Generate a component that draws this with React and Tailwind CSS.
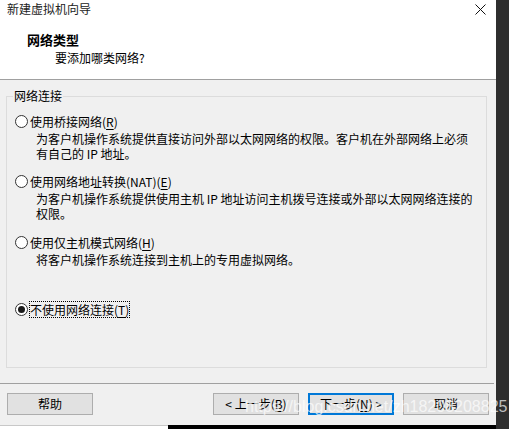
const font = { fontFamily: '"Noto Sans CJK SC", "Microsoft YaHei", "Noto Sans", sans-serif' }

function Radio({ checked }) {
  return (
    <span className="flex h-[13px] w-[13px] shrink-0 items-center justify-center rounded-full border border-[#333] bg-white">
      {checked && <span className="h-[7px] w-[7px] rounded-full bg-[#1a1a1a]" />}
    </span>
  )
}

function Option({ label, hot, desc, checked, className = '' }) {
  return (
    <div className={className}>
      <div className="flex h-[15px] items-center">
        <Radio checked={checked} />
        <span className={`ml-[2px] leading-[15px] ${checked ? 'outline outline-1 outline-dotted outline-black' : ''}`}>
          {label}(<span className="underline underline-offset-2">{hot}</span>)
        </span>
      </div>
      {desc && (
        <div className="ml-[21px] mt-[2px] leading-[15px]">
          {desc.map((l, i) => <div key={i}>{l}</div>)}
        </div>
      )}
    </div>
  )
}

function Btn({ children, focused }) {
  return (
    <button className={`h-[22px] w-[86px] bg-[#e1e1e1] text-[12px] text-black ${focused ? 'border-2 border-[#0078d7]' : 'border border-[#adadad]'}`}>
      {children}
    </button>
  )
}

export default function App() {
  return (
    <div className="relative flex h-[429px] w-[509px] overflow-hidden bg-black text-[12px] text-black" style={font}>
      <div className="flex h-[425px] w-[496px] flex-col bg-[#f0f0f0]">
        <div className="h-[80px] shrink-0 border-b border-[#a0a0a0] bg-white">
          <div className="flex items-center justify-between pl-[7px] pr-[10px] pt-[1px]">
            <span className="leading-[15px] text-[#222]">新建虚拟机向导</span>
            <svg width="11" height="11" viewBox="0 0 11 11" className="mt-[2px]">
              <path d="M0.5 0.5L10.5 10.5M10.5 0.5L0.5 10.5" stroke="#111" strokeWidth="1" />
            </svg>
          </div>
          <div className="ml-[27px] mt-[16px] text-[13px] font-bold leading-[16px]">网络类型</div>
          <div className="ml-[55px] mt-[2px] leading-[15px]">要添加哪类网络?</div>
        </div>

        <div className="relative mx-[6px] mt-[16px] h-[272px] w-[481px] border border-[#dcdcdc]">
          <span className="absolute -top-[9px] left-[6px] bg-[#f0f0f0] px-[1px] leading-[15px]">网络连接</span>
          <div className="pl-[8px] pt-[17px]">
            <Option
              label="使用桥接网络"
              hot="R"
              desc={['为客户机操作系统提供直接访问外部以太网网络的权限。客户机在外部网络上必须', '有自己的 IP 地址。']}
            />
            <Option
              className="mt-[13px]"
              label="使用网络地址转换(NAT)"
              hot="E"
              desc={['为客户机操作系统提供使用主机 IP 地址访问主机拨号连接或外部以太网网络连接的', '权限。']}
            />
            <Option
              className="mt-[14px]"
              label="使用仅主机模式网络"
              hot="H"
              desc={['将客户机操作系统连接到主机上的专用虚拟网络。']}
            />
            <Option className="mt-[35px]" label="不使用网络连接" hot="T" checked />
          </div>
        </div>

        <div className="mt-[15px] w-[494px] border-t border-[#a0a0a0]" />
        <div className="flex items-center pl-[7px] pt-[9px]">
          <Btn>帮助</Btn>
          <div className="ml-[120px] flex gap-[9px]">
            <Btn>&lt; 上一步(<span className="underline underline-offset-2">B</span>)</Btn>
            <Btn focused>下一步(<span className="underline underline-offset-2">N</span>) &gt;</Btn>
            <Btn>取消</Btn>
          </div>
        </div>
      </div>
      <div className="h-full w-[13px] bg-[#2e2e2e]" />
      <div className="absolute bottom-0 left-0 h-[4px] w-[168px] border-t border-[#c8c8c8] bg-white" />
      <span
        className="pointer-events-none absolute left-[245px] top-[398px] text-[16px] leading-[18px] text-white/70"
        style={{ fontFamily: '"Liberation Sans", Arial, sans-serif' }}
      >
        https://blog.csdn.net/zh18208208825
      </span>
    </div>
  )
}
